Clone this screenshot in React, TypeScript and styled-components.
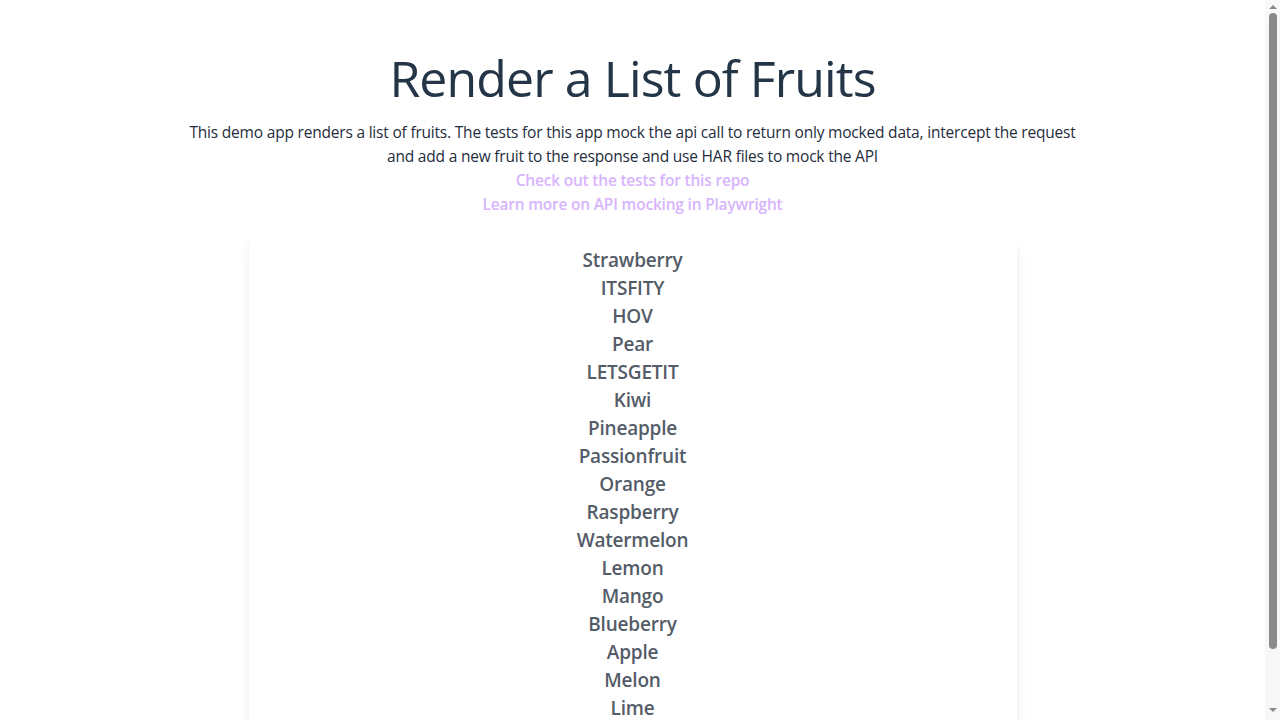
import React from "react";
import styled, { createGlobalStyle } from "styled-components";

const Global = createGlobalStyle`
  html, body { margin: 0; padding: 0; background: #ffffff; }
  body { font-family: "Open Sans", "Noto Sans", sans-serif; color: #1f2d3d; padding-right: 15px; }
`;

const Page = styled.main`
  display: flex;
  flex-direction: column;
  align-items: center;
  padding: 48px 16px 40px;
`;

const Title = styled.h1`
  margin: 0 0 12px;
  font-size: 50px;
  line-height: 60px;
  font-weight: 400;
  color: #233547;
  letter-spacing: -0.9px;
`;

const Intro = styled.p`
  margin: 0;
  max-width: 896px;
  text-align: center;
  font-size: 15.5px;
  line-height: 24px;
  color: #1f2d3d;
  letter-spacing: -0.2px;
`;

const Links = styled.div`
  display: flex;
  flex-direction: column;
  align-items: center;
  margin-bottom: 14px;
`;

const Link = styled.a`
  font-size: 15.5px;
  line-height: 24px;
  font-weight: 600;
  color: #d8b4fe;
  text-decoration: none;
  letter-spacing: -0.2px;
`;

const Card = styled.ul`
  list-style: none;
  margin: 0;
  padding: 16px;
  width: 768px;
  box-sizing: border-box;
  background: #ffffff;
  border-radius: 8px;
  box-shadow: 0 10px 15px -3px rgba(0, 0, 0, 0.1), 0 4px 6px -4px rgba(0, 0, 0, 0.1);
`;

const Item = styled.li`
  text-align: center;
  font-size: 19px;
  line-height: 28px;
  font-weight: 600;
  color: #545c68;
  letter-spacing: -0.2px;
`;

const ScrollTrack = styled.div`
  position: fixed;
  top: 0;
  right: 0;
  width: 15px;
  height: 100vh;
  background: #f8f8f8;
  display: flex;
  flex-direction: column;
  align-items: center;
  padding: 5px 0;
  box-sizing: border-box;
`;

const Arrow = styled.div<{ $down?: boolean }>`
  width: 0;
  height: 0;
  border-left: 4px solid transparent;
  border-right: 4px solid transparent;
  ${(p) => (p.$down ? "border-top: 4px solid #8a8a8a;" : "border-bottom: 4px solid #8a8a8a;")}
  margin-top: ${(p) => (p.$down ? "auto" : "0")};
  margin-bottom: ${(p) => (p.$down ? "3px" : "0")};
`;

const Thumb = styled.div`
  width: 8px;
  height: 636px;
  margin-top: 4px;
  border-radius: 4px;
  background: #8a8a8a;
`;

const fruits = [
  "Strawberry",
  "ITSFITY",
  "HOV",
  "Pear",
  "LETSGETIT",
  "Kiwi",
  "Pineapple",
  "Passionfruit",
  "Orange",
  "Raspberry",
  "Watermelon",
  "Lemon",
  "Mango",
  "Blueberry",
  "Apple",
  "Melon",
  "Lime",
];

export default function App() {
  return (
    <>
      <Global />
      <Page>
        <Title>Render a List of Fruits</Title>
        <Intro>
          This demo app renders a list of fruits. The tests for this app mock the api call to return only
          mocked data, intercept the request and add a new fruit to the response and use HAR files to mock
          the API
        </Intro>
        <Links>
          <Link href="#">Check out the tests for this repo</Link>
          <Link href="#">Learn more on API mocking in Playwright</Link>
        </Links>
        <Card>
          {fruits.map((f) => (
            <Item key={f}>{f}</Item>
          ))}
        </Card>
      </Page>
      <ScrollTrack aria-hidden>
        <Arrow />
        <Thumb />
        <Arrow $down />
      </ScrollTrack>
    </>
  );
}
